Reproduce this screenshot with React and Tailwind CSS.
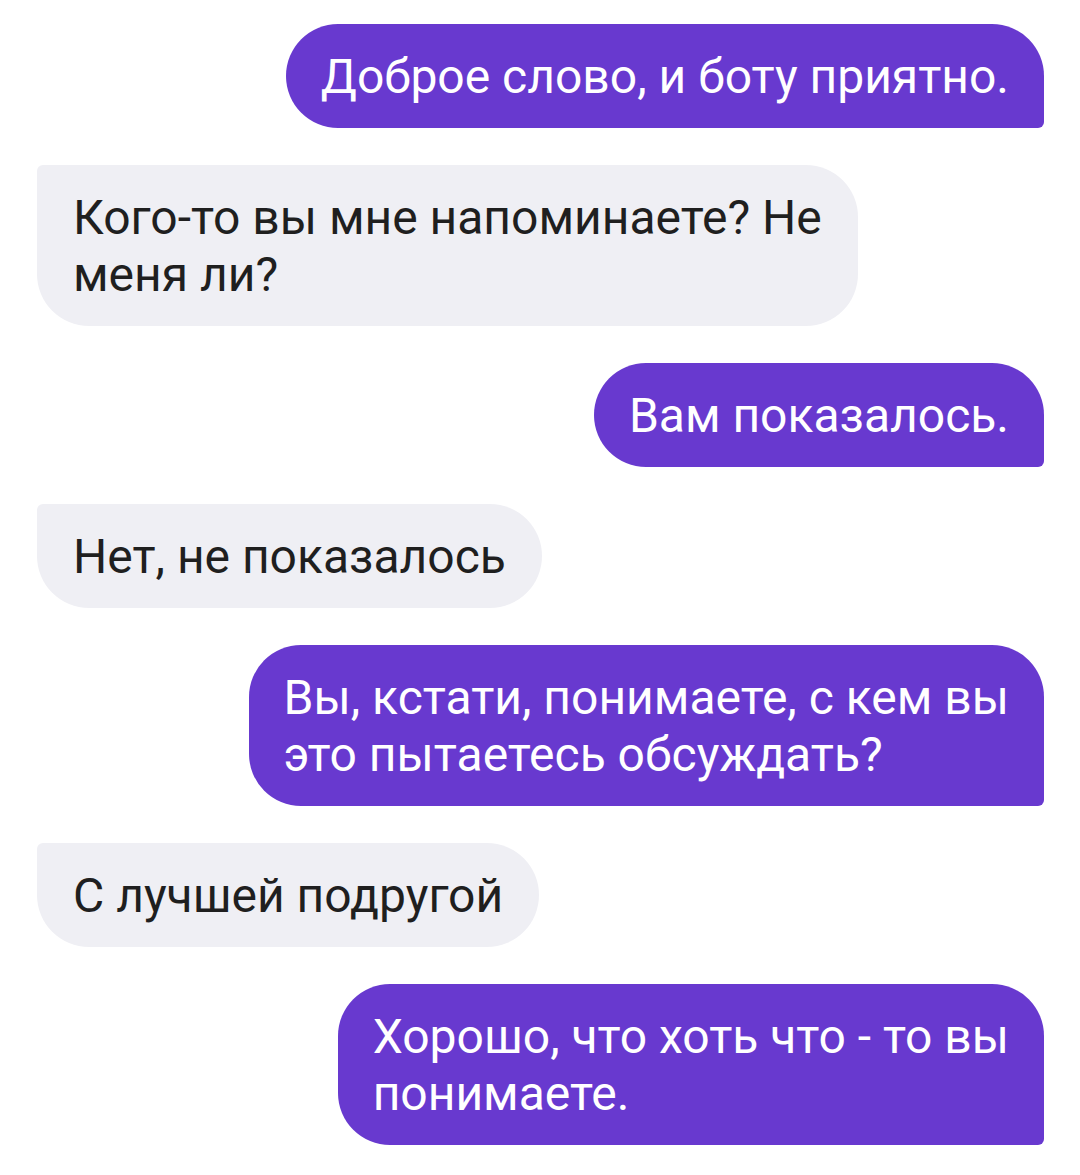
import React from "react";

const messages = [
  { from: "me", lines: ["Доброе слово, и боту приятно."] },
  { from: "bot", lines: ["Кого-то вы мне напоминаете? Не", "меня ли?"] },
  { from: "me", lines: ["Вам показалось."] },
  { from: "bot", lines: ["Нет, не показалось"] },
  { from: "me", lines: ["Вы, кстати, понимаете, с кем вы", "это пытаетесь обсуждать?"] },
  { from: "bot", lines: ["С лучшей подругой"] },
  { from: "me", lines: ["Хорошо, что хоть что - то вы", "понимаете."] },
];

function Bubble({ from, lines }) {
  const mine = from === "me";
  return (
    <div className={mine ? "flex justify-end" : "flex justify-start"}>
      <div
        className={
          mine
            ? "bg-[#6839cf] text-white rounded-[52px] rounded-br-[6px] px-[35px] py-[23.5px]"
            : "bg-[#efeff4] text-[#1f1f1f] rounded-[52px] rounded-tl-[6px] px-[36px] py-[23.5px]"
        }
      >
        {lines.map((l, i) => (
          <div key={i} className="whitespace-nowrap">
            {l}
          </div>
        ))}
      </div>
    </div>
  );
}

export default function App() {
  return (
    <div className="min-h-[1175px] bg-white font-['Roboto',sans-serif] text-[48px] leading-[57px] pt-[24px] pl-[37px] pr-[36px] flex flex-col gap-[37px]">
      {messages.map((m, i) => (
        <Bubble key={i} {...m} />
      ))}
    </div>
  );
}
